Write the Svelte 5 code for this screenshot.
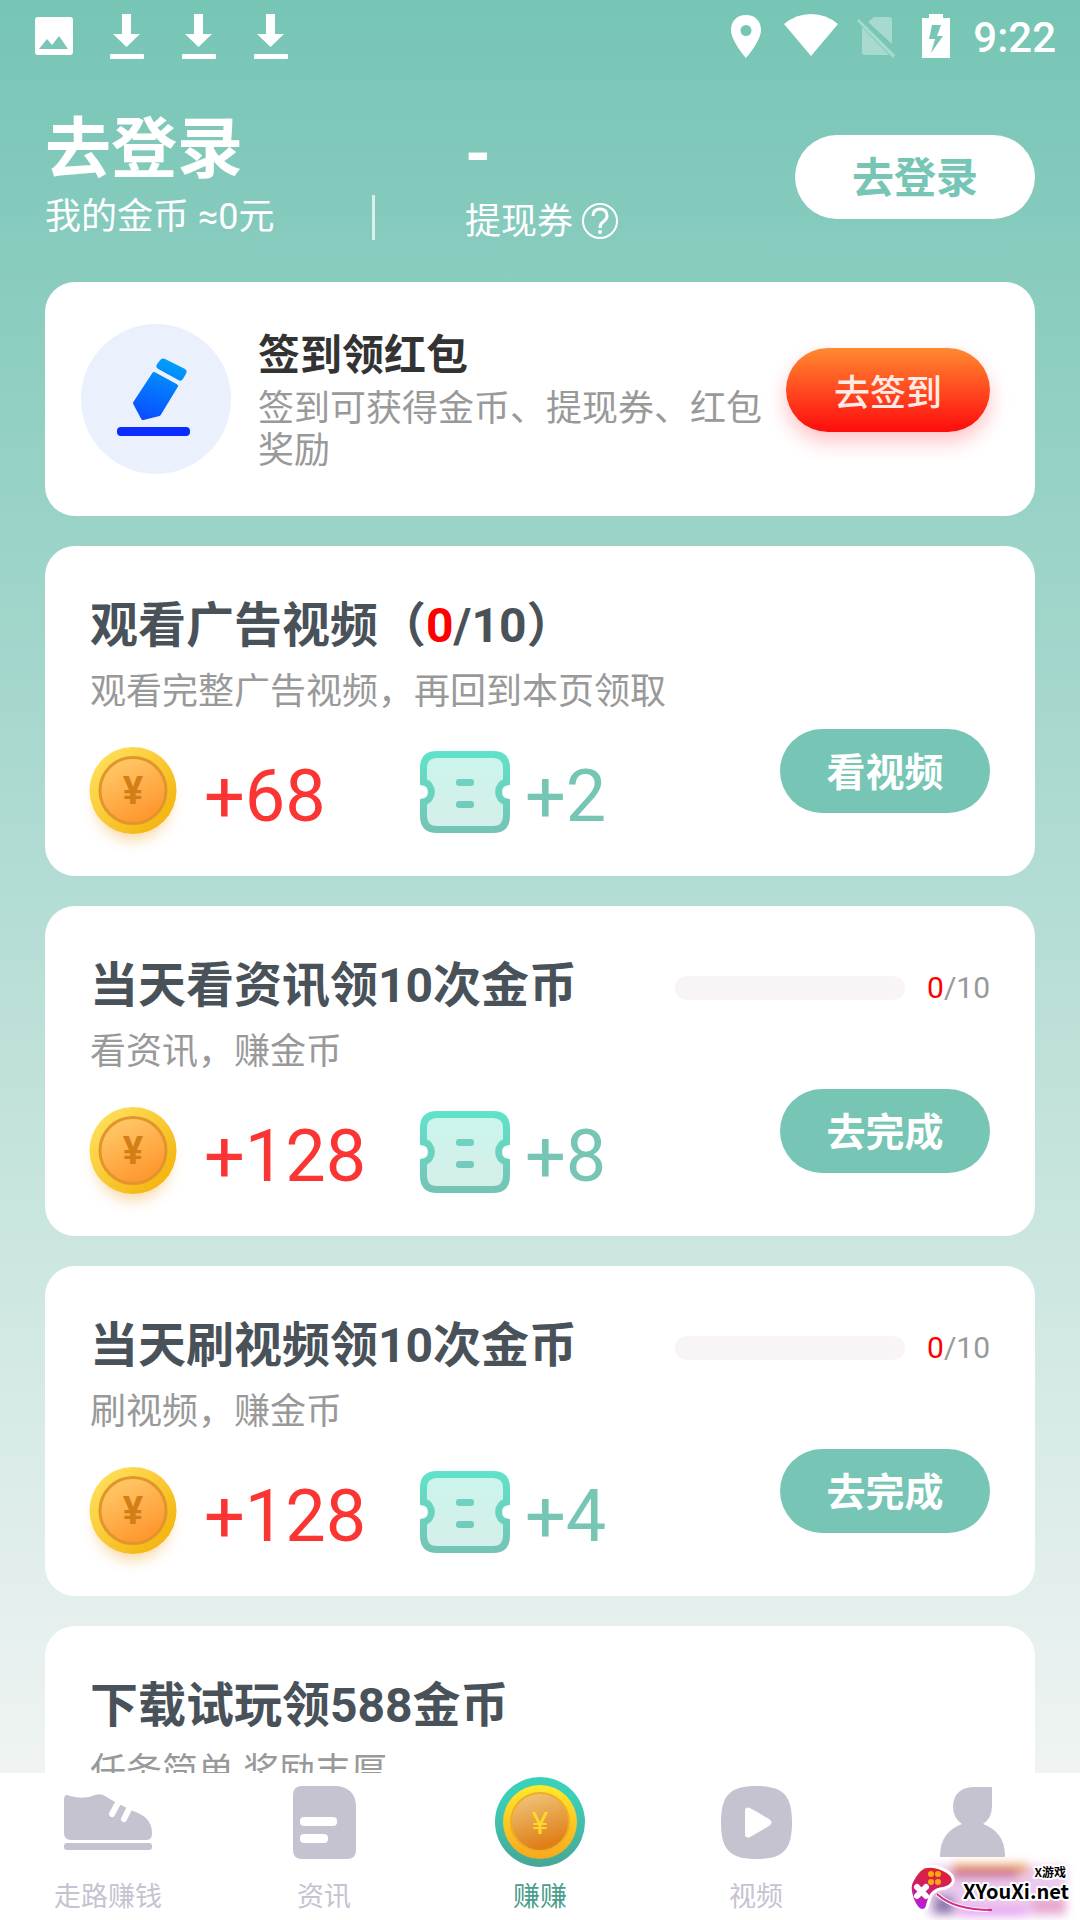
<script>
    const TASKS = [
        { title: '观看广告视频', inline: true, desc: '观看完整广告视频，再回到本页领取', done: 0, total: 10, coins: 68, tickets: 2, action: '看视频' },
        { title: '当天看资讯领10次金币', desc: '看资讯，赚金币', done: 0, total: 10, coins: 128, tickets: 8, action: '去完成' },
        { title: '当天刷视频领10次金币', desc: '刷视频，赚金币', done: 0, total: 10, coins: 128, tickets: 4, action: '去完成' },
        { title: '下载试玩领588金币', desc: '任务简单 奖励丰厚' }
    ];

    const TABS = [
        { id: 'walk', label: '走路赚钱' },
        { id: 'news', label: '资讯' },
        { id: 'earn', label: '赚赚' },
        { id: 'video', label: '视频' },
        { id: 'mine', label: '' }
    ];

    let active = 'earn';
</script>

{#snippet download()}
    <svg width="38" height="46" viewBox="0 0 38 46" fill="#fff">
        <path d="M15 1h9v20h9L19.500 34 6 21h9z" />
        <rect x="3" y="41" width="34" height="5" rx="1" />
    </svg>
{/snippet}

{#snippet coin()}
    <svg width="88" height="100" viewBox="0 0 88 100">
        <defs>
            <linearGradient id="coin-rim" x1="0" y1="0" x2="1" y2="1">
                <stop offset="0.1" stop-color="#ffdf5c" />
                <stop offset="0.9" stop-color="#f4b30c" />
            </linearGradient>
            <linearGradient id="coin-face" x1="0" y1="0" x2="0.5" y2="1">
                <stop offset="0" stop-color="#ffd070" />
                <stop offset="1" stop-color="#ff9830" />
            </linearGradient>
            <filter id="coin-shadow" x="-30%" y="-30%" width="160%" height="160%">
                <feGaussianBlur stdDeviation="7" />
            </filter>
        </defs>
        <circle cx="43" cy="56" r="38" fill="#f2b04b" opacity="0.45" filter="url(#coin-shadow)" />
        <circle cx="43" cy="43.500" r="43.500" fill="url(#coin-rim)" />
        <circle cx="43" cy="43.500" r="33" fill="url(#coin-face)" stroke="#e2952b" stroke-width="3" />
        <text x="43" y="57" text-anchor="middle" class="yen">¥</text>
    </svg>
{/snippet}

{#snippet ticket()}
    <svg width="90" height="92" viewBox="0 0 90 92">
        <defs>
            <linearGradient id="ticket-edge" x1="0" y1="0" x2="0" y2="82" gradientUnits="userSpaceOnUse">
                <stop offset="0" stop-color="#5fe3ca" />
                <stop offset="1" stop-color="#75c3b4" />
            </linearGradient>
            <linearGradient id="ticket-fill" x1="0" y1="0" x2="0" y2="1">
                <stop offset="0" stop-color="#cbf5ec" />
                <stop offset="1" stop-color="#d5eee9" />
            </linearGradient>
        </defs>
        <path
            d="M17 3.5H73Q86.5 3.5 86.5 17V31C76 33 76 49 86.5 51V65Q86.5 78.5 73 78.5H17Q3.5 78.5 3.5 65V51C14 49 14 33 3.5 31V17Q3.5 3.5 17 3.5Z"
            fill="url(#ticket-fill)" stroke="url(#ticket-edge)" stroke-width="7" />
        <rect x="36" y="28" width="18" height="7" rx="3" fill="#6fd2c0" />
        <rect x="36" y="50" width="18" height="7" rx="3" fill="#72cbbb" />
    </svg>
{/snippet}

{#snippet tabIcon(id)}
    {#if id === 'walk'}
        <svg width="88" height="56" viewBox="0 0 88 56" fill="#c6c3d1">
            <path d="M0 6Q0 -1 6 2Q20 6 31 1Q37 -1 41 2L51 8L57 11L69 17Q88 23 88 39V40Q88 46 82 46H7Q0 46 0 39Z" />
            <path d="M55 7L48 20M66 13L60 25" stroke="#fff" stroke-width="6" stroke-linecap="round" />
            <rect y="49" width="88" height="7" rx="3" />
        </svg>
    {:else if id === 'news'}
        <svg width="63" height="73" viewBox="0 0 63 73" fill="#c6c3d1">
            <path d="M9 0H44Q63 2 63 21V64Q63 73 54 73H9Q0 73 0 64V9Q0 0 9 0Z" />
            <rect x="7" y="31" width="37" height="9" rx="4" fill="#fff" />
            <rect x="7" y="48" width="28" height="9" rx="4" fill="#fff" />
        </svg>
    {:else if id === 'earn'}
        <svg width="90" height="90" viewBox="0 0 90 90">
            <defs>
                <linearGradient id="earn-ring" x1="0" y1="0" x2="0" y2="1">
                    <stop offset="0.2" stop-color="#3ccfb9" />
                    <stop offset="1" stop-color="#48a695" />
                </linearGradient>
                <linearGradient id="earn-rim" x1="0" y1="0" x2="0" y2="1">
                    <stop offset="0" stop-color="#ffe92c" />
                    <stop offset="1" stop-color="#f7a81d" />
                </linearGradient>
                <linearGradient id="earn-face" x1="0" y1="0" x2="0.3" y2="1">
                    <stop offset="0" stop-color="#efcb82" />
                    <stop offset="1" stop-color="#e07e17" />
                </linearGradient>
            </defs>
            <circle cx="45" cy="45" r="45" fill="url(#earn-ring)" />
            <circle cx="45" cy="45" r="37" fill="url(#earn-rim)" />
            <circle cx="45" cy="45" r="29" fill="url(#earn-face)" stroke="#f1ac22" stroke-width="2" />
            <text x="45" y="57" text-anchor="middle" class="yen thin">¥</text>
        </svg>
    {:else if id === 'video'}
        <svg width="71" height="73" viewBox="0 0 71 73" fill="#c6c3d1">
            <path d="M35.5 0C62 0 71 9 71 36.5S62 73 35.5 73S0 64 0 36.5S9 0 35.5 0Z" />
            <path d="M24 25Q24 20 29 22L48 33Q53 36.500 48 40L29 51Q24 53 24 48Z" fill="#fff" />
        </svg>
    {:else}
        <svg width="65" height="70" viewBox="0 0 65 70" fill="#c6c3d1">
            <path d="M33 0H52V19Q52 31 43 37Q65 45 65 69Q65 70 64 70H1Q0 70 0 69Q0 45 22 37Q13 31 13 19Q14 1 33 0Z" />
        </svg>
    {/if}
{/snippet}

<div class="app">
    <div class="status">
        <div class="status_left">
            <svg width="38" height="46" viewBox="0 0 38 46">
                <path d="M3 4H35Q38 4 38 7V39Q38 42 35 42H3Q0 42 0 39V7Q0 4 3 4ZM4 36H33L24 23L17 32L12 26Z" fill="#fff" fill-rule="evenodd" />
            </svg>
            {@render download()}
            {@render download()}
            {@render download()}
        </div>
        <div class="status_right">
            <svg width="34" height="46" viewBox="0 0 34 46" fill="#fff">
                <path d="M17 2C8 2 2 8 2 17C2 28 17 45 17 45S32 28 32 17C32 8 26 2 17 2ZM17 12A5.500 5.500 0 1 1 17 23A5.500 5.500 0 1 1 17 12Z" fill-rule="evenodd" />
            </svg>
            <svg width="54" height="46" viewBox="0 0 54 46" fill="#fff">
                <path d="M1 11Q13 1 28 1T55 11L28 43Z" />
            </svg>
            <svg width="42" height="46" viewBox="0 0 42 46" fill="#fff" opacity="0.35">
                <path d="M11 9L17 4H32Q35 4 35 7V31ZM5 14L32 42Q31 42 31 42H8Q5 42 5 39Z" />
                <path d="M0 8L2 6L38 42L36 45Z" />
            </svg>
            <svg width="34" height="46" viewBox="0 0 34 46" fill="#fff">
                <path d="M10 1H24V5H31V45H3V5H10ZM13 12L10 26H16L12 40L24 23H18L22 12Z" fill-rule="evenodd" />
            </svg>
            <span class="clock">9:22</span>
        </div>
    </div>

    <header>
        <div class="balance">
            <div class="big">去登录</div>
            <div class="small">我的金币 ≈0元</div>
        </div>
        <div class="divider"></div>
        <div class="coupons">
            <div class="big">-</div>
            <div class="small">
                提现券
                <svg width="38" height="38" viewBox="0 0 38 38" fill="none" stroke="#fff">
                    <circle cx="19" cy="18" r="17" stroke-width="2" />
                    <path d="M12 13Q12 6 19 6T26 13Q26 16 22 19Q19 21 19 25" stroke-width="3" />
                    <circle cx="19" cy="29" r="2" fill="#fff" stroke="none" />
                </svg>
            </div>
        </div>
        <button class="login">去登录</button>
    </header>

    <main>
        <section class="card signin">
            <svg width="150" height="150" viewBox="0 0 150 150">
                <defs>
                    <linearGradient id="pen" x1="90" y1="34" x2="70" y2="100" gradientUnits="userSpaceOnUse">
                        <stop offset="0" stop-color="#00a2fb" />
                        <stop offset="1" stop-color="#0a49ff" />
                    </linearGradient>
                </defs>
                <circle cx="75" cy="75" r="75" fill="#eaf0fc" />
                <g fill="url(#pen)" stroke="url(#pen)" stroke-linejoin="round">
                    <path d="M82 38L102 48L99 53L79 42Z" stroke-width="7" />
                    <path d="M73 50L95 62L78 90L62 94L54 79Z" stroke-width="4" />
                </g>
                <rect x="36" y="103" width="73" height="9" rx="4" fill="#0a2cff" />
            </svg>
            <div class="signin_text">
                <h2>签到领红包</h2>
                <p>签到可获得金币、提现券、红包奖励</p>
            </div>
            <button class="signin_btn">去签到</button>
        </section>

        {#each TASKS as task}
            <section class="card task">
                <div class="task_head">
                    {#if task.inline}
                        <h2>{task.title}（<em>{task.done}</em>/{task.total}）</h2>
                    {:else}
                        <h2>{task.title}</h2>
                        {#if task.total}
                            <div class="progress">
                                <progress value={task.done} max={task.total} aria-label={task.title}></progress>
                                <span><em>{task.done}</em>/{task.total}</span>
                            </div>
                        {/if}
                    {/if}
                </div>
                <div class="task_body">
                    <div>
                        <p>{task.desc}</p>
                        {#if task.coins}
                            <div class="rewards">
                                <div class="reward coins">{@render coin()}<span>+{task.coins}</span></div>
                                <div class="reward tickets">{@render ticket()}<span>+{task.tickets}</span></div>
                            </div>
                        {/if}
                    </div>
                    {#if task.action}
                        <button class="task_btn">{task.action}</button>
                    {/if}
                </div>
            </section>
        {/each}
    </main>

    <nav>
        {#each TABS as tab}
            <a href="#{tab.id}" class:active={active === tab.id} on:click={() => active = tab.id}>
                <span class="tab_icon">{@render tabIcon(tab.id)}</span>
                <span class="tab_label">{tab.label}</span>
            </a>
        {/each}
        <svg class="watermark" width="180" height="64" viewBox="0 0 180 64">
            <defs>
                <filter id="smear" x="-20%" y="-50%" width="140%" height="200%">
                    <feGaussianBlur stdDeviation="5" />
                </filter>
                <linearGradient id="pad" x1="0.5" y1="0" x2="0.3" y2="1">
                    <stop offset="0.1" stop-color="#dc2038" />
                    <stop offset="0.5" stop-color="#cf1f6a" />
                    <stop offset="1" stop-color="#b31df0" />
                </linearGradient>
            </defs>
            <g filter="url(#smear)">
                <rect x="28" y="10" width="138" height="50" fill="#ecc9ee" />
                <rect x="52" y="8" width="76" height="10" fill="#eba25e" />
                <rect x="52" y="14" width="66" height="8" fill="#c86a94" />
                <rect x="34" y="40" width="20" height="18" fill="#8a78b0" />
                <rect x="60" y="52" width="66" height="8" fill="#e79cf2" />
                <rect x="132" y="44" width="34" height="12" fill="#e7a3c8" />
            </g>
            <path d="M37 38Q54 54 88 54" fill="none" stroke="#fff" stroke-width="4" />
            <path d="M37 38Q54 54 92 54" fill="none" stroke="#d3308c" stroke-width="2" />
            <path d="M24 11Q32 9 40 12Q55 18 53 26Q50 32 40 33Q33 35 30 41L27 51Q25 56 20 54Q14 50 11 38Q9 30 12 25Q17 15 24 11Z"
                fill="url(#pad)" stroke="#fff" stroke-width="3" />
            <g fill="#ffa70f">
                <circle cx="31" cy="18" r="3" /><circle cx="38" cy="18" r="3" />
                <circle cx="31" cy="26" r="3" /><circle cx="38" cy="26" r="3" />
            </g>
            <path d="M17 31L26 40M26 31L17 40" stroke="#fff" stroke-width="6" stroke-linecap="round" />
            <text x="166" y="21" text-anchor="end" class="wm_small">X游戏</text>
            <text x="169" y="43" text-anchor="end" class="wm_big">XYouXi.net</text>
        </svg>
    </nav>
</div>

<style>
    :global(body) {
        background: #fff;
    }

    .app {
        height: 100vh;
        display: flex;
        flex-direction: column;
        overflow: hidden;
        font-family: Roboto, "Noto Sans CJK SC", sans-serif;
        background: linear-gradient(#76c5b5, #f0f4f3 1780px);
    }

    h2, p {
        margin: 0;
    }

    em {
        font-style: normal;
        color: #f00;
    }

    svg {
        display: block;
        flex: none;
        overflow: visible;
    }

    button {
        flex: none;
        height: 84px;
        padding: 0 0 5px;
        border: none;
        border-radius: 42px;
        font-family: inherit;
        font-weight: 700;
        color: #fff;
        cursor: pointer;
    }

    .status {
        flex: none;
        display: flex;
        justify-content: space-between;
        height: 72px;
        padding: 0 24px 0 35px;
        align-items: center;
    }

    .status_left {
        display: flex;
        gap: 34px;
    }

    .status_right {
        display: flex;
        align-items: center;
        gap: 20px;
    }

    .clock {
        padding-top: 4px;
        font-size: 42px;
        line-height: 48px;
        font-weight: 500;
        color: #fff;
    }

    header {
        flex: none;
        display: flex;
        align-items: flex-start;
        padding: 39px 45px;
        color: #fff;
    }

    .balance {
        width: 327px;
    }

    .big {
        font-size: 66px;
        line-height: 78px;
        font-weight: 700;
    }

    .small {
        display: flex;
        align-items: center;
        gap: 8px;
        margin-top: 7px;
        font-size: 36px;
        line-height: 42px;
    }

    .divider {
        width: 3px;
        height: 45px;
        margin: 84px 90px 0 0;
        background: rgba(255, 255, 255, .7);
    }

    .coupons {
        flex: 1;
        padding-top: 5px;
    }

    .login {
        width: 240px;
        margin-top: 24px;
        background: #fff;
        font-size: 42px;
        color: #76c5b5;
    }

    main {
        flex: 1;
        min-height: 0;
        overflow: hidden;
        display: flex;
        flex-direction: column;
        gap: 30px;
        padding: 0 45px;
    }

    .card {
        flex: none;
        border-radius: 30px;
        background: #fff;
    }

    .signin {
        display: flex;
        align-items: center;
        padding: 42px 45px 42px 36px;
    }

    .signin_text {
        flex: 1;
        margin: 6px 24px 0 27px;
    }

    .signin_text h2 {
        margin-bottom: 8px;
        font-size: 42px;
        line-height: 48px;
        font-weight: 700;
        color: #333;
    }

    p {
        font-size: 36px;
        line-height: 42px;
        color: #999;
    }

    .signin_btn {
        width: 204px;
        margin-bottom: 18px;
        padding: 0;
        background: linear-gradient(#ff8a30, #ff4a20 50%, #fd0c0c);
        box-shadow: 0 10px 20px rgba(255, 20, 30, .25);
        font-size: 36px;
        font-weight: 500;
        color: #ffebe6;
    }

    .task {
        padding: 52px 45px 29px;
    }

    .task_head {
        display: flex;
        justify-content: space-between;
        align-items: center;
        margin-bottom: 17px;
    }

    .task_head h2 {
        font-size: 48px;
        line-height: 56px;
        font-weight: 700;
        color: #495159;
    }

    .progress {
        display: flex;
        align-items: center;
        gap: 22px;
        margin-top: 4px;
        font-size: 30px;
        line-height: 36px;
        color: #999;
    }

    progress {
        appearance: none;
        width: 230px;
        height: 24px;
        border: none;
        border-radius: 12px;
        overflow: hidden;
        background: #f9f4f5;
    }

    progress::-webkit-progress-bar {
        background: #f9f4f5;
    }

    progress::-webkit-progress-value {
        background: #fb3434;
    }

    .task_body {
        display: flex;
        justify-content: space-between;
        align-items: flex-end;
    }

    .rewards {
        display: flex;
        margin-top: 34px;
    }

    .reward {
        display: flex;
        align-items: center;
        font-size: 72px;
        line-height: 84px;
    }

    .coins {
        width: 330px;
        gap: 26px;
        color: #fb3434;
    }

    .tickets {
        gap: 15px;
        color: #76c5b5;
    }

    .yen {
        font-size: 38px;
        font-weight: 700;
        fill: #d27f17;
    }

    .thin {
        font-size: 32px;
        font-weight: 400;
        fill: #fdd82a;
    }

    .task_btn {
        width: 210px;
        margin-bottom: 34px;
        background: #76c5b5;
        font-size: 39px;
    }

    nav {
        flex: none;
        position: relative;
        display: flex;
        background: #fff;
    }

    nav a {
        flex: 1;
        display: flex;
        flex-direction: column;
        align-items: center;
        padding: 3px 0 7px;
        color: #c6c3d1;
        text-decoration: none;
    }

    nav a.active {
        color: #4b9c8c;
    }

    .tab_icon {
        display: flex;
        align-items: center;
        height: 92px;
    }

    .tab_label {
        margin-top: 13px;
        height: 32px;
        font-size: 27px;
        line-height: 32px;
    }

    /* sits over the last tab */
    .watermark {
        position: absolute;
        right: 0;
        bottom: 0;
    }

    .wm_small, .wm_big {
        font-family: "Noto Sans CJK SC", sans-serif;
        font-size: 12px;
        font-weight: 700;
        stroke: #fff;
        stroke-width: 4px;
        stroke-linejoin: round;
        paint-order: stroke;
    }

    .wm_big {
        font-size: 20px;
    }
</style>
